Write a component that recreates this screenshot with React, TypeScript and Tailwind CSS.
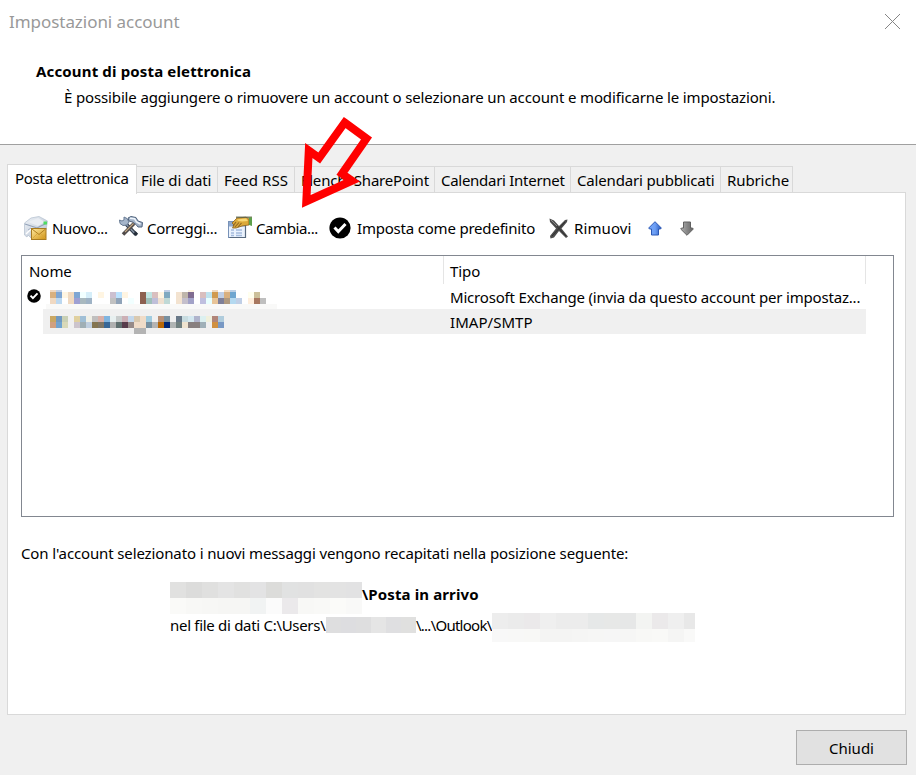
import React from 'react'

const tabs = [
    {label: 'File di dati', box: 'w-[81px] pl-1', text: 'tracking-[-0.12px]'},
    {label: 'Feed RSS', box: 'w-[77px] pl-1.5', text: 'tracking-[0.05px]'},
    {label: 'Elenchi SharePoint', box: 'w-[140px] pl-1.5', text: 'tracking-[-0.18px]'},
    {label: 'Calendari Internet', box: 'w-[136px] pl-1.5', text: 'tracking-[-0.28px]'},
    {label: 'Calendari pubblicati', box: 'w-[150px] pl-1.5', text: 'tracking-[-0.16px]'},
    {label: 'Rubriche', box: 'w-[72px] pl-1.5', text: 'tracking-[-0.1px]'},
]

// "-" is an empty cell, every other entry is a hex colour
const nameStrip = 'f0d8c0 c0cfe6 - - - - - - - - - - - - - - - - - c0cfe6 - - - fff5e2 - - - f0d9c0 - f5dcc0 bcd0e6'
const nameTop = 'd9b07f 7fa6d3 fff5e2 f0d9c0 7fa6d3 f2ffff d6eef9 - fff5e2 - ccc0d0 bce3ff fff5e2 - - 8c6050 c0e5e3 d9bfbf fff5e2 7fa9c0 - f3e3d0 bfb6ab 806c90 - d9bfbf bfe3f0 d09a50 c0cfe6 d9b07f 6fa6d0 - - ffffef ccc09a -'
const nameBottom = 'f0d9c2 bcd8f0 - f0d9c0 9ea0d3 a9b9bf 9fb3c5 - - - c1c1c1 90a3b8 - f2ffff - 8c6050 9fbfb9 bfbfd9 efe0d0 c0d9d6 - f3e3d0 c4bfcb a3a3c8 - bfbfdf e8ffff e8c498 7f8099 b09a80 b4d9f0 c0cfe6 - ffeedc a87860 bfbfbf'
const mailTop = 'c9a763 7098c0 c9d0b5 - e0d09f a0bfd6 f0f0e6 c0bfbf d9b0a8 80b5e0 e8f0f0 c8cccc ccafb5 c4d8ec d9c9b0 f0dcc8 a0cce0 - b89078 7890a0 - 687888 c8dce0 d4e8f0 b0b4cc dcf0f0 f0f0dc b08478 b0ccdc'
const mailBottom = 'd0a080 70a3d0 d9d9b9 - ccc4cc a0afb5 c0cfe0 857550 7f7766 386898 b0b0b0 607070 583c4c 968a88 f0dcc8 f0dcc8 7890a0 b4b4b4 b86808 002878 b0b4b4 708080 f0e4d0 888080 888080 a0b0b8 - d09040 7898c4'
const mailTail = '- - - - - - - - - - - - - - b4b4b4 b4b4b4'

const folderTop = 'e1e1e0 dcdcdb e0e0df e4e4e4 e1e1e0 e3e3e4 dcdcda e1e2e2 e1e1e1 e3e3e2 e3e3e3 e2e2e3'
const folderBottom = 'fafaf8 f8f8f6 f7f7f5 f6f6f4 f6f6f4 f1f3f3 fbfbfb ebe9eb f8f8f6 f9f9f7 fbfbf9 f9f9f8'
const userCells = 'dededf dddde0 dededf e5e5e5 dfdfe1 e0e0df'
const fileTop = 'ededed ebebeb ebe9ea efefef ececec ececec e6e8e8 e7e8e7 e6e7e7 f3f4f2 ebe9ea efefef e8e8e8'
const fileBottom = 'f8f8f8 f8f8f7 f8f8f6 f4f4f3 f4f4f3 f5f5f4 f6f6f5 f6f6f6 f6f6f5 f8f8f6 f9f9f7 f5f5f4 f9f9f8'

const Mosaic = ({cells, cell}: {cells: string; cell: string}) => (
    <div className="flex overflow-hidden">
        {cells.split(' ').map((c, i) => (
            <span key={i} className={`shrink-0 ${cell}`} style={{backgroundColor: c === '-' ? 'transparent' : '#' + c}}/>
        ))}
    </div>
)

const NewIcon = () => (
    <svg width="24" height="24" viewBox="0 0 24 24">
        <defs>
            <linearGradient id="env" x1="0" y1="0" x2="1" y2="1">
                <stop offset="0" stopColor="#eef2f7"/>
                <stop offset="1" stopColor="#b4c0d0"/>
            </linearGradient>
            <linearGradient id="gold" x1="0" y1="0" x2="1" y2="1">
                <stop offset="0" stopColor="#ffeaa0"/>
                <stop offset="1" stopColor="#cf9212"/>
            </linearGradient>
        </defs>
        <path d="M0.5 7 L7 2 L15 0.5 L23.5 5 L22 14 L8 18 L7 22 L4 19 L3 21 L0.5 19 Z" fill="url(#env)" stroke="#b9c4d2" strokeWidth="0.8"/>
        <path d="M4 6 L14 2 L21 6 L14 10 Z" fill="#e9edf3"/>
        <path d="M1 8 L13 12 L23 7" fill="none" stroke="#93a2b8" strokeWidth="1.1"/>
        <path d="M2 18 L8 12" fill="none" stroke="#fff" strokeWidth="1.4"/>
        <path d="M4 14 L7 12" fill="none" stroke="#a3b0c4" strokeWidth="1"/>
        <rect x="19.5" y="5.5" width="3.5" height="3" fill="#4fdc62"/>
        <rect x="7.5" y="12.5" width="14.5" height="11" fill="url(#gold)" stroke="#a87b22"/>
        <path d="M8 13 L15 18.5 L21.5 13" fill="none" stroke="#b07f20"/>
        <path d="M8.5 22.5 L13 18 M21.5 22.5 L17 18" fill="none" stroke="#d8a53a" strokeWidth="0.8"/>
    </svg>
)

const RepairIcon = () => (
    <svg width="24" height="24" viewBox="0 0 24 24">
        <path d="M7 8 L17 18.5" stroke="#2f3947" strokeWidth="3.6"/>
        <path d="M7 8 L15.5 17" stroke="#8794a6" strokeWidth="1.5"/>
        <path d="M0.5 4 L3 5 L5 4 L5 1 L8 2.5 L10 6 L8 9 L4 9.5 L1 7.5 Z" fill="#a6b6cb" stroke="#687b94" strokeWidth="1"/>
        <path d="M9 2 L12 0.5 L17 1.5 L19 5 L23.5 6.5 L23 11 L19 11 L17 8.5 L13.5 6 L10 5 Z" fill="#a3b3c8" stroke="#51647e"/>
        <path d="M11 2.2 L15.5 2.7 L17.5 6 L21.5 8" fill="none" stroke="#eff5fc" strokeWidth="1.5"/>
        <path d="M15 7.5 L4 18.5" stroke="#4f4a4a" strokeWidth="3.6"/>
        <path d="M14.5 7.5 L6 16" stroke="#c4a884" strokeWidth="1.1"/>
        <path d="M15.5 16.5 L18 19" stroke="#252e3a" strokeWidth="3.2"/>
    </svg>
)

const ChangeIcon = () => (
    <svg width="24" height="24" viewBox="0 0 24 24">
        <rect x="0.5" y="5.5" width="17" height="16" fill="#eaf2fd" stroke="#7892b8"/>
        <rect x="1" y="6" width="16" height="4.5" fill="#8fa8cc"/>
        <path d="M3 14h3M8 14h6M3 17h3M8 17h6M3 19.5h3M8 19.5h6" stroke="#a4bbdd" strokeWidth="1.3"/>
        <path d="M17.5 9 V21.5 H1.5" fill="none" stroke="#586a80" strokeWidth="1.2"/>
        <path d="M4 7 L9 2 L18 1.2 L21 3 L21 9 L17 9.5 L14 10 L11 11 L8 12 L4.5 12 L6 9 Z" fill="#dba93a" stroke="#8a6120" strokeWidth="0.8"/>
        <path d="M9 3.5 L18 2.5 L20 5 L14 5.5 L10 4.8 Z" fill="#f8d877"/>
        <path d="M8 6 L5 10 M11 6.5 L7 11 M13.5 7 L10 11" stroke="#8f6420" strokeWidth="1.1"/>
        <path d="M8 1.2 H24" stroke="#5e6246" strokeWidth="1.2"/>
        <path d="M21 1.5 H24 V10 L21 9 Z" fill="#5d9f4a"/>
    </svg>
)

const CheckIcon = ({size}: {size: number}) => (
    <svg width={size} height={size} viewBox="0 0 22 22">
        <circle cx="11" cy="11" r="10.6" fill="#000"/>
        <path d="M5.5 10.5 L9.3 14.5 L16.5 7" fill="none" stroke="#fff" strokeWidth="3"/>
    </svg>
)

const RemoveIcon = () => (
    <svg width="20" height="21" viewBox="0 0 20 21">
        <path d="M0.5 0.5 L5 2.5 L10 8 L16 2 L18.5 1.5 L18 4 L12.5 10.5 L19 18.5 L17 20 L10 13 L5 19.5 L1.5 20.5 L1 18 L7 10.5 L1 4 Z" fill="#4c4c4c"/>
        <path d="M3 3 L17 18 M3 18 L16 4" stroke="#303030" strokeWidth="1"/>
        <path d="M2 2 L8 8" stroke="#888" strokeWidth="1"/>
    </svg>
)

const MoveIcon = ({down}: {down?: boolean}) => (
    <svg width="14" height="15" viewBox="0 0 14 15" className={down ? 'rotate-180' : ''}>
        <defs>
            <linearGradient id={down ? 'grey' : 'blue'} x1="0" y1="0" x2="1" y2="0">
                <stop offset="0" stopColor={down ? '#646464' : '#75a7fa'}/>
                <stop offset="0.5" stopColor={down ? '#888888' : '#6d9ff5'}/>
                <stop offset="1" stopColor={down ? '#b0b0b0' : '#2757bb'}/>
            </linearGradient>
        </defs>
        <path d="M7 0.7 L13.3 7 L12.5 8 H10.5 V14 H3.5 V8 H1.5 L0.7 7 Z" fill={`url(#${down ? 'grey' : 'blue'})`} stroke={down ? '#616161' : '#2d59b4'}/>
    </svg>
)

const Header = () => (
    <header className="h-[145px] border-b border-[#a0a0a0] bg-white">
        <div className="flex h-[45px] justify-between pl-[9px] pr-4">
            <p className="pt-[9px] text-[17px] leading-[26px] tracking-[-0.05px] text-[#999]">Impostazioni account</p>
            <svg width="15" height="15" viewBox="0 0 15 15" className="mt-3.5">
                <path d="M0 0 L15 15 M15 0 L0 15" stroke="#858585" strokeWidth="1"/>
            </svg>
        </div>
        <h1 className="pl-9 pt-3.5 font-bold leading-6 tracking-[0.15px]">Account di posta elettronica</h1>
        <p className="pl-16 pt-0.5 leading-6 tracking-[-0.14px]">È possibile aggiungere o rimuovere un account o selezionare un account e modificarne le impostazioni.</p>
    </header>
)

const Toolbar = () => (
    <div className="flex h-[26px] items-center">
        <div className="flex w-[95px] items-center gap-1"><NewIcon/><span className="tracking-[-0.3px]">Nuovo...</span></div>
        <div className="flex w-[109px] items-center gap-1"><RepairIcon/><span className="tracking-[-0.3px]">Correggi...</span></div>
        <div className="flex w-[101px] items-center gap-1"><ChangeIcon/><span className="tracking-[-0.4px]">Cambia...</span></div>
        <div className="flex w-[220px] items-center gap-1.5"><CheckIcon size={22}/><span className="tracking-[-0.2px]">Imposta come predefinito</span></div>
        <div className="flex w-[99px] items-center gap-[5px]"><RemoveIcon/><span className="tracking-[0.1px]">Rimuovi</span></div>
        <div className="flex gap-[18px]"><MoveIcon/><MoveIcon down/></div>
    </div>
)

const AccountList = () => (
    <div className="mt-3.5 ml-[-3px] h-[262px] w-[873px] border border-[#828790] bg-white">
        <div className="flex h-7 leading-[30px]">
            <div className="w-[422px] border-r border-[#e5e5e5] pl-[7px] tracking-[-0.05px]">Nome</div>
            <div className="w-[422px] border-r border-[#e5e5e5] pl-1.5 tracking-[-0.1px]">Tipo</div>
        </div>
        <div className="flex h-[25px]">
            <div className="flex w-[21px] pl-[5px] pt-[5px]"><CheckIcon size={14}/></div>
            <div className="w-[401px]">
                <div className="ml-[7px] pt-1.5">
                    <Mosaic cells={nameStrip} cell="h-0.5 w-1.5"/>
                    <Mosaic cells={nameTop} cell="size-1.5"/>
                    <Mosaic cells={nameBottom} cell="size-1.5"/>
                </div>
                <div className="ml-[3px] h-[5px] w-[231px] bg-[#f9f9f8]"/>
            </div>
            <p className="w-[421px] pl-1.5 leading-[26px] tracking-[-0.19px]">Microsoft Exchange (invia da questo account per impostaz...</p>
        </div>
        <div className="ml-[21px] flex h-[25px] w-[823px] bg-[#f0f0f0]">
            <div className="w-[401px] pl-[7px] pt-[7px]">
                <Mosaic cells={mailTop} cell="size-1.5"/>
                <Mosaic cells={mailBottom} cell="size-1.5"/>
                <Mosaic cells={mailTail} cell="size-1.5"/>
            </div>
            <p className="pl-1.5 leading-[26px] tracking-[0.05px]">IMAP/SMTP</p>
        </div>
    </div>
)

const Delivery = () => (
    <div className="ml-[-3px] pt-6">
        <p className="leading-6 tracking-[-0.13px]">Con l'account selezionato i nuovi messaggi vengono recapitati nella posizione seguente:</p>
        <div className="ml-[149px] mt-[17px] flex h-8">
            <div>
                <Mosaic cells={folderTop} cell="size-4"/>
                <Mosaic cells={folderBottom} cell="size-4"/>
            </div>
            <p className="font-bold leading-6 tracking-[0.12px]">\Posta in arrivo</p>
        </div>
        <div className="ml-[149px] mt-[-1px] flex h-7">
            <p className="w-[156px] whitespace-nowrap leading-6 tracking-[-0.3px]">nel file di dati C:\Users\</p>
            <div className="w-[90px] pt-1"><Mosaic cells={userCells} cell="h-4 w-[15px]"/></div>
            <p className="w-[76px] whitespace-nowrap leading-6 tracking-[-0.75px]">\...\Outlook\</p>
            <div className="w-[203px]">
                <Mosaic cells={fileTop} cell="size-4"/>
                <Mosaic cells={fileBottom} cell="h-[13px] w-4"/>
            </div>
        </div>
    </div>
)

const App = () => {
    return (
        <div className="relative h-[775px] w-[916px] overflow-hidden bg-[#f0f0f0] font-['Noto_Sans','Open_Sans',sans-serif] text-[15px] text-black">
            <Header/>
            <main className="pl-[7px] pt-[19px]">
                <nav className="flex h-[29px] items-end whitespace-nowrap">
                    <div className="z-10 mb-[-1px] h-[30px] w-[130px] border border-b-0 border-[#d9d9d9] bg-white pl-[7px] leading-[26px] tracking-[-0.28px]">Posta elettronica</div>
                    {tabs.map((tab) => (
                        <div key={tab.label} className={`h-[27px] border-r border-t border-[#d9d9d9] leading-[26px] ${tab.box} ${tab.text}`}>{tab.label}</div>
                    ))}
                </nav>
                <section className="mt-[-1px] h-[523px] w-[899px] border border-[#d9d9d9] bg-white pl-4 pt-[22px]">
                    <Toolbar/>
                    <AccountList/>
                    <Delivery/>
                </section>
            </main>
            <footer className="flex justify-end pr-[9px] pt-[15px]">
                <button className="h-[35px] w-[111px] border border-[#adadad] bg-[#e1e1e1] pt-0.5">Chiudi</button>
            </footer>
            <svg width="90" height="110" viewBox="290 110 90 110" className="absolute left-[290px] top-[110px] z-20">
                <path d="M344.7 122.5 L366.5 138.5 L342 173.7 L352 180.7 L306.3 201.5 L308.8 150.5 L319.2 158 Z" fill="none" stroke="#f00" strokeWidth="8"/>
            </svg>
        </div>
    )
}
export default App
